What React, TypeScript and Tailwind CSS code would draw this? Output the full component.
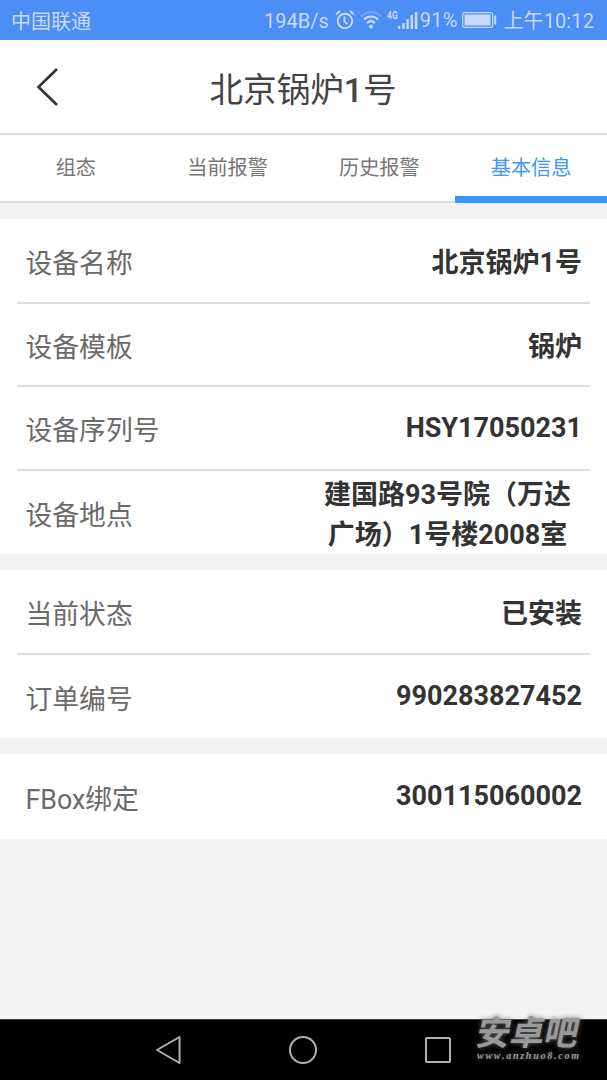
import React from "react";

interface RowProps {
  label: string;
  value: React.ReactNode;
  height: string;
  numeric?: boolean;
  last?: boolean;
}

const tabs = ["组态", "当前报警", "历史报警", "基本信息"];

function StatusBar() {
  return (
    <div className="h-[40px] bg-[#4c8df6] text-[#c5dafc] text-[20px] leading-[40px] flex items-center pl-[11px] pr-[13px] whitespace-nowrap">
      <span className="flex-1 pt-[3px]">中国联通</span>
      <span className="pt-[2px]">194B/s</span>
      <svg className="ml-[6px]" width="20" height="20" viewBox="0 0 20 20" fill="none" stroke="currentColor" strokeWidth="2">
        <circle cx="10" cy="11" r="7.2" />
        <path d="M9.5 6.5v5l3 2.5M1 4.5L5 1M19 4.5L15 1" />
      </svg>
      <svg className="ml-[5px]" width="22" height="20" viewBox="0 0 22 20" fill="none" stroke="currentColor" strokeWidth="2">
        <path d="M1 6.5C7 0.5 15 0.5 21 6.5" opacity="0.35" />
        <path d="M4 9.5C8 5.5 14 5.5 18 9.5M7 13C9.5 10.7 12.5 10.7 15 13" />
        <circle cx="11" cy="16.5" r="2" fill="currentColor" stroke="none" />
      </svg>
      <span className="ml-[5px] mb-[9px] w-[11px] text-[10px] leading-[10px] font-bold inline-block origin-left scale-x-[0.85]">4G</span>
      <svg width="20" height="20" viewBox="0 0 20 20" fill="currentColor">
        <path d="M0 16h2.2v3H0zM4.2 13h2.4v6H4.2zM8.4 9h2.4v10H8.4zM12.6 5h2.4v14h-2.4zM16.8 2h2.6v17h-2.6z" />
      </svg>
      <span className="ml-[2px] tracking-[0.2px]">91%</span>
      <svg className="ml-[5px]" width="36" height="18" viewBox="0 0 36 18" fill="none">
        <rect x="0.7" y="1.7" width="30" height="14.6" rx="2" stroke="currentColor" strokeWidth="1.2" />
        <rect x="2.5" y="3.5" width="26" height="11" fill="currentColor" />
        <path d="M33.2 4.5v9" stroke="currentColor" strokeWidth="2" />
      </svg>
      <span className="ml-[5px] pt-[2px] tracking-[0.1px]">上午10:12</span>
    </div>
  );
}

function Row({ label, value, height, numeric, last }: RowProps) {
  return (
    <div className={`${height} mx-[17px] pl-[8.5px] pr-[8px] flex items-center justify-between ${last ? "" : "border-b-2 border-[#dedede]"}`}>
      <span className="text-[26.8px] text-[#6a6a6a] pt-[7px]">{label}</span>
      <span
        className={`text-[27px] font-bold text-[#333333] text-center leading-[40px] ${
          numeric ? "pb-[1px]" : "pt-[4px]"
        }`}
      >
        {value}
      </span>
    </div>
  );
}

function NavBar() {
  return (
    <div className="h-[61px] bg-black border-t border-[#444444] flex items-center text-[#b0b0b0] relative">
      <svg className="ml-[155px]" width="27" height="30" viewBox="0 0 27 30" fill="none" stroke="currentColor" strokeWidth="2" strokeLinejoin="round">
        <path d="M2 15L24.5 2V28Z" />
      </svg>
      <svg className="ml-[106px]" width="30" height="30" viewBox="0 0 30 30" fill="none" stroke="currentColor" strokeWidth="2">
        <circle cx="15" cy="15" r="13" />
      </svg>
      <svg className="ml-[106px]" width="28" height="28" viewBox="0 0 28 28" fill="none" stroke="currentColor" strokeWidth="2">
        <rect x="2" y="2" width="24" height="24" rx="1" />
      </svg>
      <div className="absolute left-[477px] -top-[4px] text-[#999999] [text-shadow:0_0_5px_#666666]">
        <div className="text-[34px] leading-[34px] font-bold -skew-x-12 whitespace-nowrap">安卓吧</div>
        <div className="font-['Liberation_Serif',serif] text-[10px] leading-[11px] font-bold italic tracking-[1.75px] whitespace-nowrap">www.anzhuo8.com</div>
      </div>
    </div>
  );
}

export default function App() {
  return (
    <div className="w-[607px] h-[1080px] bg-[#f3f3f3] flex flex-col overflow-hidden font-[Roboto,'Noto_Sans_CJK_SC',sans-serif]">
      <StatusBar />
      <header className="h-[95px] bg-white border-b-2 border-[#dddddd] flex items-center">
        <svg className="ml-[36px] mt-[1px]" width="24" height="40" viewBox="0 0 24 40" fill="none" stroke="#333333" strokeWidth="2.6">
          <path d="M21 2L2.5 20L21 38" />
        </svg>
        <h1 className="flex-1 text-center pr-[61px] pt-[10px] text-[33.6px] text-[#444444]">
          北京锅炉<span className="font-medium">1</span>号
        </h1>
      </header>
      <nav className="h-[68px] bg-white border-b-2 border-[#dddddd] flex">
        {tabs.map((tab, index) => (
          <div
            key={tab}
            className={`flex-1 h-[68px] text-center text-[20.2px] leading-[66px] ${
              index === 3 ? "text-[#3d97fb] border-b-[7px] border-[#3995fd]" : "text-[#777777]"
            }`}
          >
            {tab}
          </div>
        ))}
      </nav>
      <main className="flex-1">
        <section className="mt-[16px] pt-[1px] bg-white">
          <Row label="设备名称" value="北京锅炉1号" height="h-[84px]" />
          <Row label="设备模板" value="锅炉" height="h-[83px]" />
          <Row label="设备序列号" value="HSY17050231" height="h-[84px]" numeric />
          <Row
            label="设备地点"
            value={
              <span className="block mr-[11px]">
                建国路93号院（万达
                <br />
                广场）1号楼2008室
              </span>
            }
            height="h-[83px]"
            last
          />
        </section>
        <section className="mt-[16px] bg-white">
          <Row label="当前状态" value="已安装" height="h-[85px]" />
          <Row label="订单编号" value="990283827452" height="h-[83px]" numeric last />
        </section>
        <section className="mt-[16px] bg-white">
          <Row label="FBox绑定" value="300115060002" height="h-[85px]" numeric last />
        </section>
      </main>
      <NavBar />
    </div>
  );
}
